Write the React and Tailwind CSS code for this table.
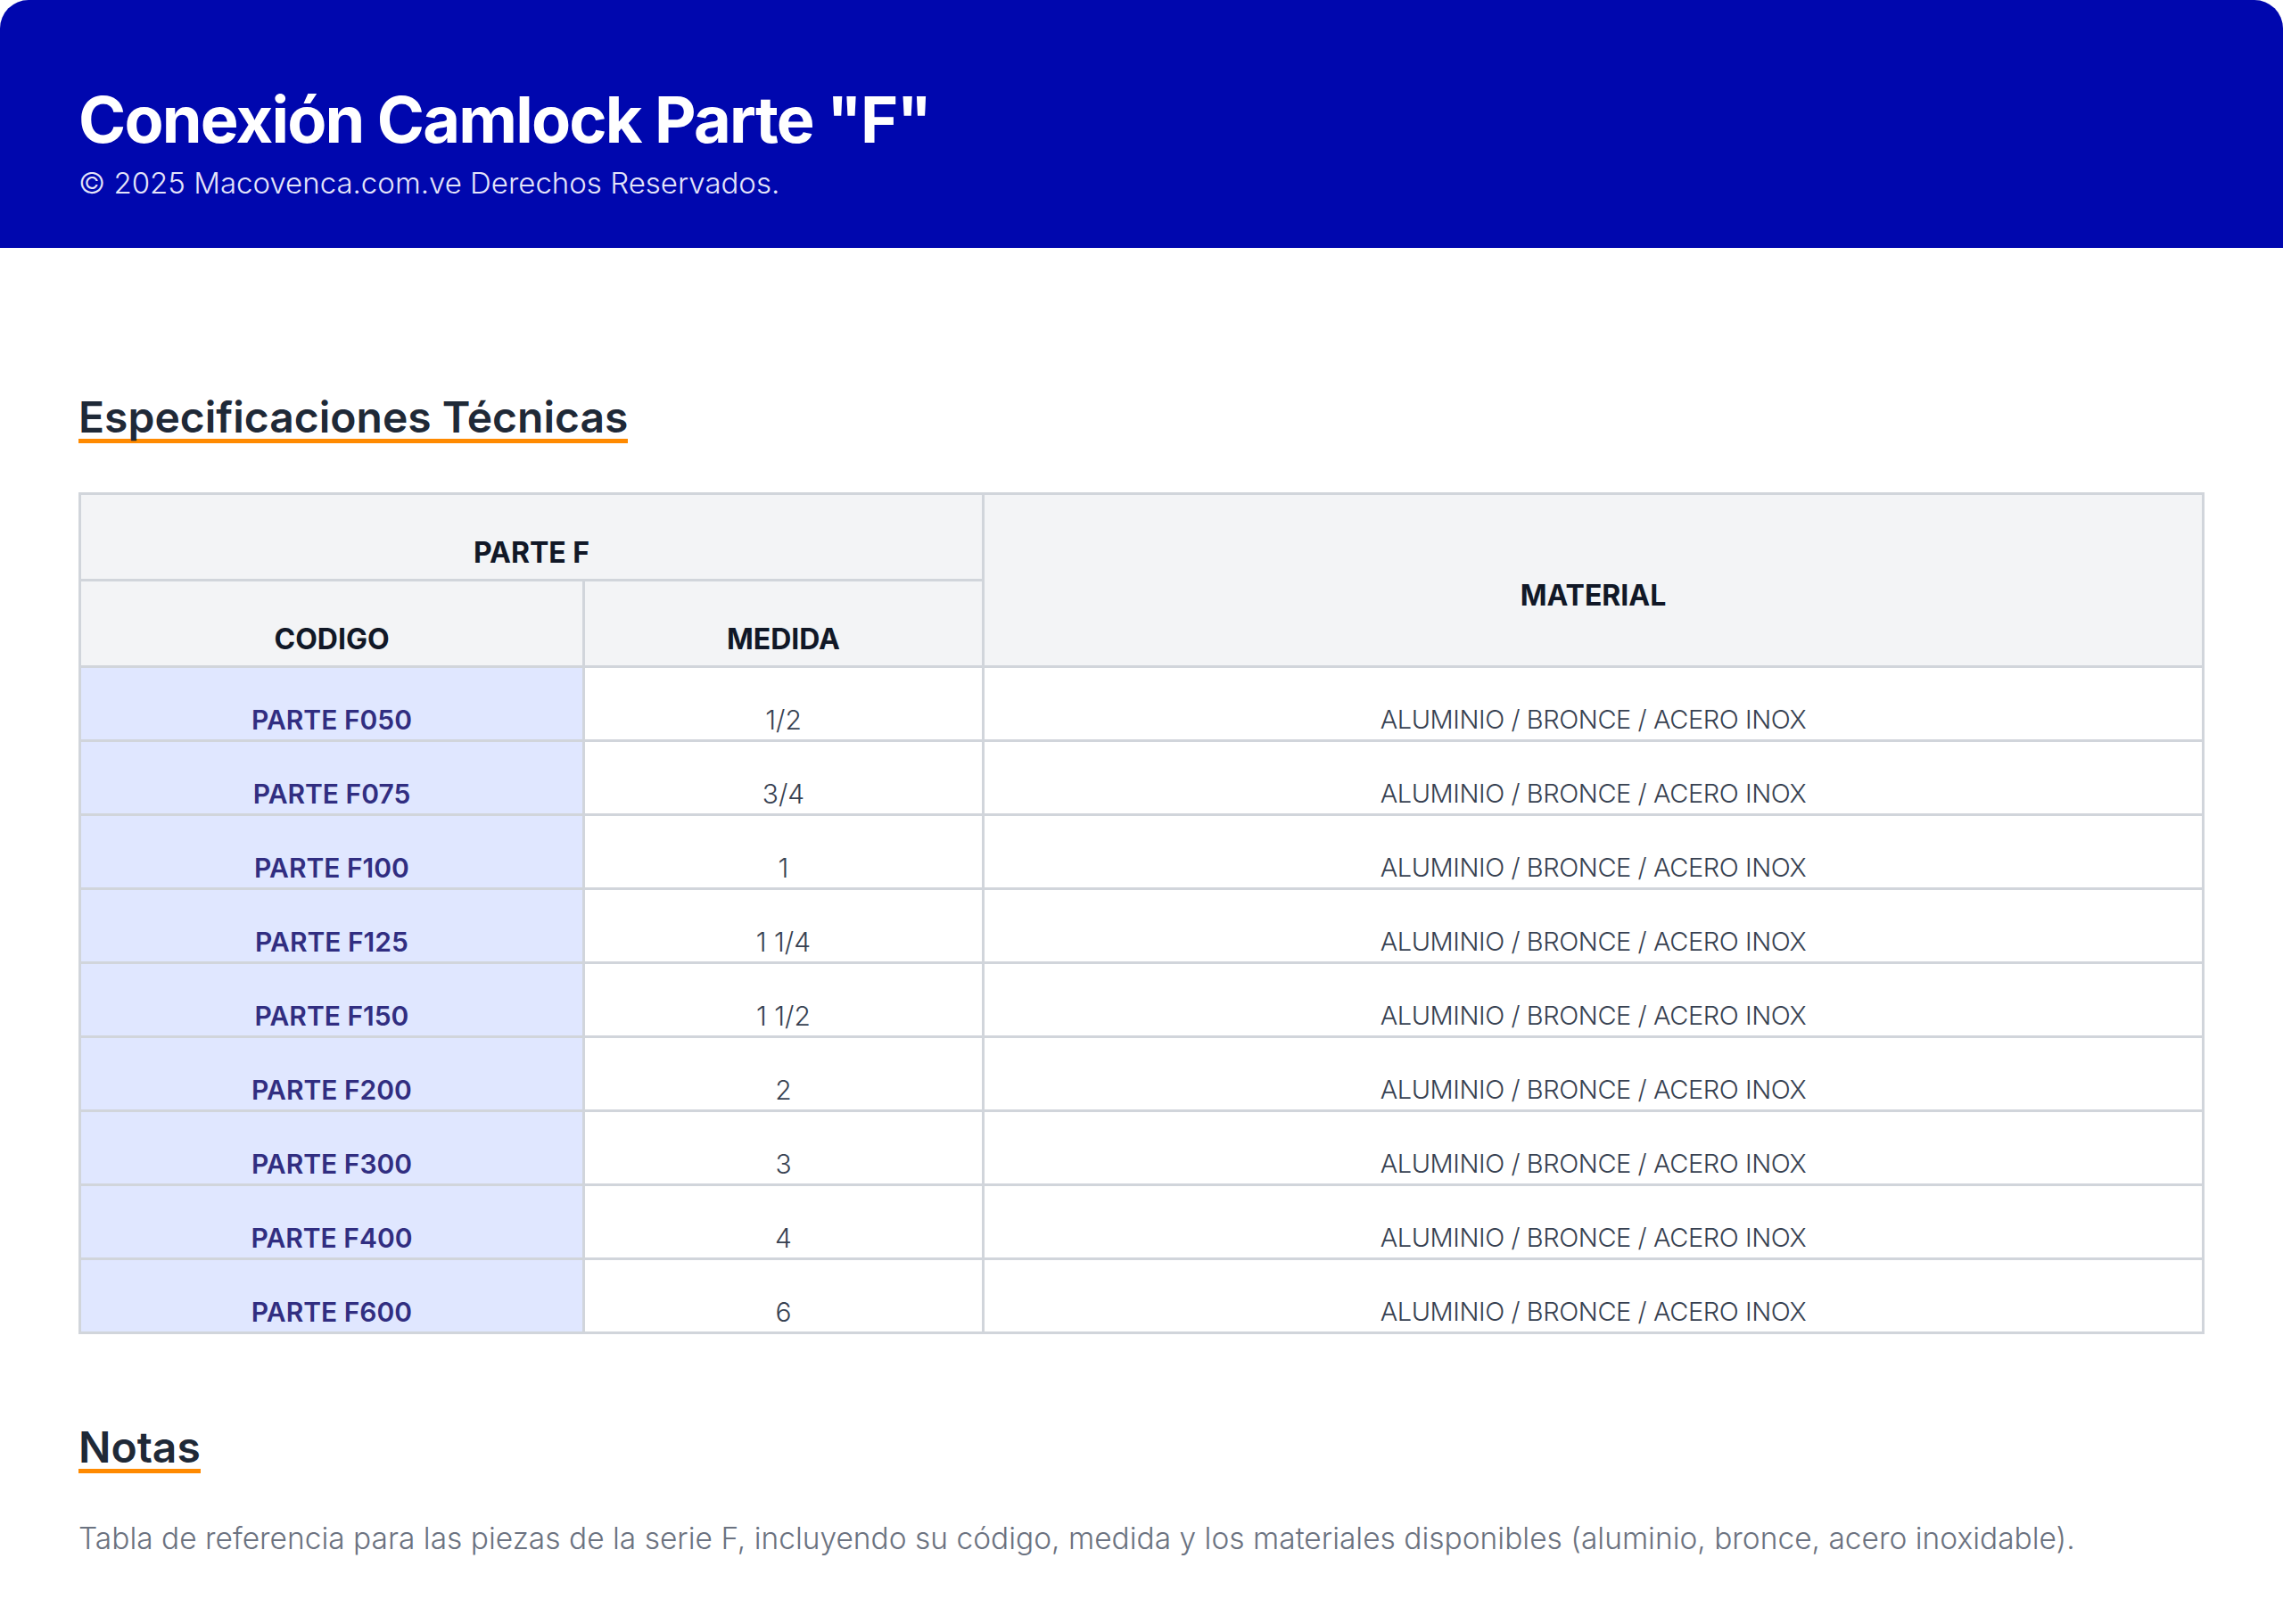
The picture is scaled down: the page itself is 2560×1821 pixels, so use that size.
import React from "react";

const rows = [
  ["PARTE F050", "1/2"],
  ["PARTE F075", "3/4"],
  ["PARTE F100", "1"],
  ["PARTE F125", "1 1/4"],
  ["PARTE F150", "1 1/2"],
  ["PARTE F200", "2"],
  ["PARTE F300", "3"],
  ["PARTE F400", "4"],
  ["PARTE F600", "6"],
];

export default function App() {
  return (
    <div className="min-h-[1821px] bg-white font-[Inter,sans-serif]">
      <header className="bg-[#0007ae] rounded-t-[32px] px-[88px] pt-[98px] pb-[48px]">
        <h1 className="text-[72px] font-bold leading-none text-white tracking-[-0.025em]">
          Conexión Camlock Parte "F"
        </h1>
        <p className="mt-[12px] text-[33px] font-light leading-[1.45] text-[#e4e4fa]">
          © 2025 Macovenca.com.ve Derechos Reservados.
        </p>
      </header>

      <main className="px-[88px] pt-[166px]">
        <h2 className="inline-block text-[48px] font-semibold leading-none text-[#1f2937] border-b-[5px] border-[#ff8a00]">
          Especificaciones Técnicas
        </h2>

        <table className="mt-[55px] w-full border-collapse border-[3px] border-[#d1d5db]">
          <thead>
            <tr className="h-[97px]">
              <th
                colSpan={2}
                className="border-[3px] border-[#d1d5db] bg-[#f3f4f6] pt-[36px] pb-0 align-middle text-[32px] font-bold text-[#111827]"
              >
                PARTE F
              </th>
              <th
                rowSpan={2}
                className="border-[3px] border-[#d1d5db] bg-[#f3f4f6] pt-[36px] pb-0 align-middle text-[32px] font-bold text-[#111827]"
              >
                MATERIAL
              </th>
            </tr>
            <tr className="h-[97px]">
              <th className="w-[565px] border-[3px] border-[#d1d5db] bg-[#f3f4f6] pt-[36px] pb-0 align-middle text-[32px] font-bold text-[#111827]">
                CODIGO
              </th>
              <th className="w-[448px] border-[3px] border-[#d1d5db] bg-[#f3f4f6] pt-[36px] pb-0 align-middle text-[32px] font-bold text-[#111827]">
                MEDIDA
              </th>
            </tr>
          </thead>
          <tbody>
            {rows.map(([code, size]) => (
              <tr key={code} className="h-[83px]">
                <td className="border-[3px] border-[#d1d5db] bg-[#e0e7ff] pt-[36px] pb-0 align-middle text-center text-[30px] font-semibold leading-[1.4] text-[#312e81]">
                  {code}
                </td>
                <td className="border-[3px] border-[#d1d5db] bg-white pt-[36px] pb-0 align-middle text-center text-[30px] font-light leading-[1.4] text-[#374151]">
                  {size}
                </td>
                <td className="border-[3px] border-[#d1d5db] bg-white pt-[36px] pb-0 align-middle text-center text-[29px] font-light leading-[1.4] tracking-[-0.015em] text-[#374151]">
                  ALUMINIO / BRONCE / ACERO INOX
                </td>
              </tr>
            ))}
          </tbody>
        </table>

        <section className="mt-[103px]">
          <h2 className="inline-block text-[48px] font-semibold leading-none text-[#1f2937] border-b-[5px] border-[#ff8a00]">
            Notas
          </h2>
          <p className="mt-[49px] text-[33.5px] font-light leading-[1.45] text-[#6b7280]">
            Tabla de referencia para las piezas de la serie F, incluyendo su código, medida y los materiales disponibles (aluminio, bronce, acero inoxidable).
          </p>
        </section>
      </main>
    </div>
  );
}
